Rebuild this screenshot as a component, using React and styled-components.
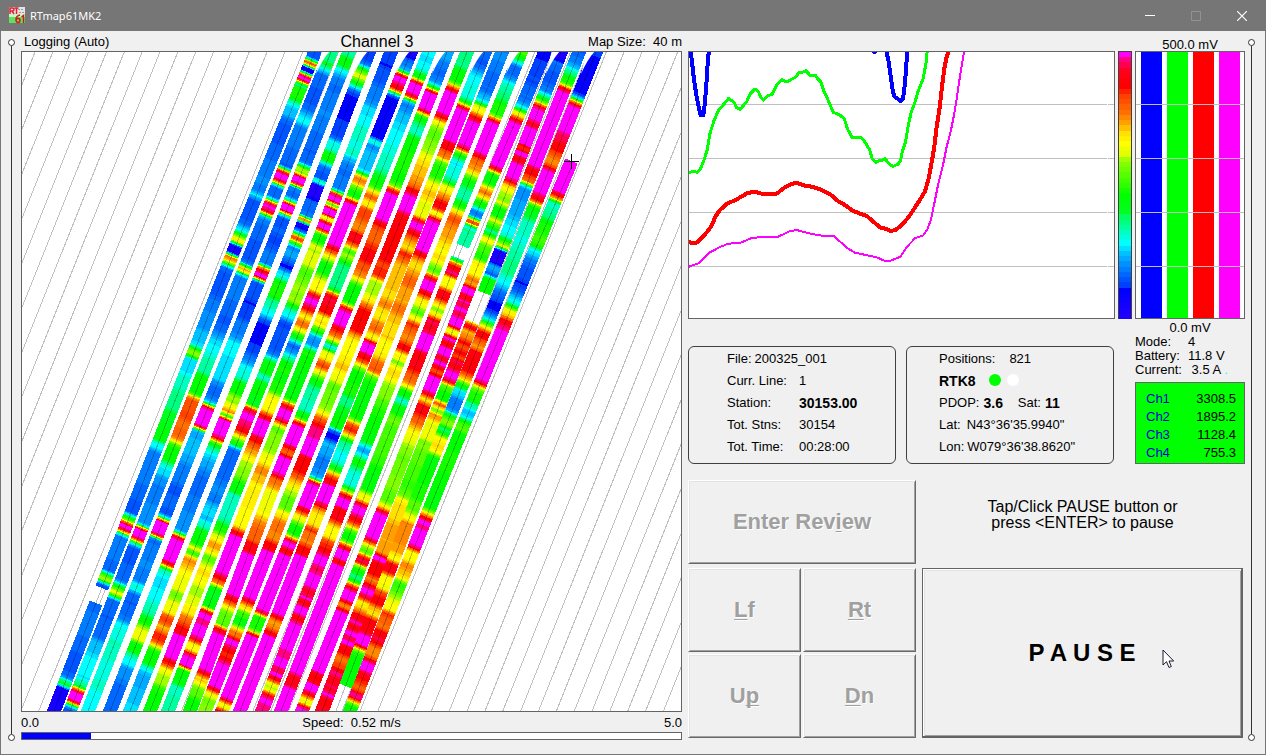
import React from "react";
import styled, { createGlobalStyle } from "styled-components";

const GlobalStyle = createGlobalStyle`
  * { box-sizing: border-box; }
  body {
    margin: 0;
    background: #f0f0f0;
    color: #000;
    font: 13px/14px "Liberation Sans", Arial, sans-serif;
  }
  p, h1, h2, table { margin: 0; }
`;

/* ---------- colour scale ---------- */

const ANCHORS = [
  [0, 0x2000ff], [5, 0x0000ff], [6, 0x0040ff], [8, 0x0068ff], [10, 0x0090ff],
  [12, 0x00c0ff], [14, 0x00ffff], [15, 0x00ffe0], [16, 0x00ffc0], [18, 0x00ff80],
  [19, 0x00ff60], [20, 0x00ff20], [23, 0x00ff00], [26, 0x40ff00], [29, 0x80ff00],
  [30, 0xa0ff00], [31, 0xe0ff00], [33, 0xffff00], [35, 0xffe000], [37, 0xffa000],
  [39, 0xff7000], [42, 0xff4000], [43, 0xff2000], [44, 0xff0000], [47, 0xff0020],
  [49, 0xff0080], [50, 0xff00ff],
];

const PALETTE = Array.from({ length: 51 }, (_, v) => {
  const hi = Math.max(1, ANCHORS.findIndex(([at]) => at >= v));
  const [a, ca] = ANCHORS[hi - 1];
  const [b, cb] = ANCHORS[hi];
  const t = (v - a) / (b - a);
  const channel = (shift) => {
    const from = (ca >> shift) & 255;
    const to = (cb >> shift) & 255;
    return Math.round(from + (to - from) * t);
  };
  return `rgb(${channel(16)}, ${channel(8)}, ${channel(0)})`;
});

/* Letter codes for levels on the scale; "-" is a gap in the track. */
const LEVEL = {
  V: 1, D: 5, b: 6, B: 8, s: 9, S: 11, k: 12, K: 13, c: 14, t: 16, T: 17, u: 18,
  g: 20, G: 23, l: 25, L: 26, h: 28, H: 29, a: 30, y: 32, Y: 33, f: 35, F: 36,
  o: 37, O: 39, r: 42, R: 45, P: 48, p: 49, M: 50, "-": null,
};

/* ---------- survey tracks ---------- */

/* x: track centre at the four KNOTS; data: level changes down the track. */
const KNOTS = [52, 250, 495, 711];
const TRACKS = [
  { x: [315, 234, 138, 54], data: "52B 60y 63M 66D 74R 76M 82a 84s 86G 100T 104k 118B 175s 193c 198B 225k 229c 233G 237Y 244V 255O 260Y 263G 266B 300s 330k 343c 347G 350a 357c 375t 390T 410g 425G 442c 450s 465B 515G 520y 523M 530R 532G 535B 573G 577Y 581G 583B 588- 603B 678c 681g 687V" },
  { x: [331, 252, 155, 70], data: "52T 62g 66t 68c 72B 105s 112k 117c 125s 130B 168G 170R 172M 181R 183G 186B 199G 202R 204M 210R 213Y 215k 219B 263k 266Y 269O 272G 275B 325s 333S 338K 345c 357t 370T 375G 395Y 398r 420O 438F 441y 444G 462T 467c 476S 485s 525c 526G 528M 539R 541G 544c 546B 583T 586G 590y 595G 598B 620s 640k 655K 680T 686G 689R 691M 702R 704G 706c 708B" },
  { x: [349, 271, 173, 88], data: "52T 57G 67T 70c 76s 85B 110s 148B 164c 166G 169Y 172G 175M 184R 186B 199T 201G 203M 213G 216B 235b 250B 266Y 268O 270R 272M 279G 281B 300b 320B 333s 340c 380k 383s 387B 400k 403c 405Y 406R 408M 427R 429c 431k 440K 455S 463s 470B 485b 495B 515s 516T 518G 520M 535R 537c 539B 560s 583t 592s 600B 618s 622K 627c 640t 690c 700K" },
  { x: [369, 293, 195, 110], data: "52b 62s 67G 72a 80G 84T 88s 92b 138s 141c 150T 153G 162c 166B 181Y 183V 199B 218R 222V 229s 234a 237R 239M 240Y 242G 246s 250k 258s 263b 270k 273c 277T 281G 298T 303t 309c 317s 321b 353B 358s 363k 367c 378T 382G 395a 404Y 409O 414G 418M 437R 440Y 442G 446T 451c 455k 460S 470s 532T 534Y 536R 538M 563R 566Y 568g 570t 576K 598c 604t 612u 617G 625a 629Y 642G 653T 658c 666s 680B 700s" },
  { x: [391, 315, 216, 130], data: "52b 68B 85s 105k 115K 122c 127t 150T 157k 163s 170B 191G 193R 195M 203G 207M 217G 220R 222M 231Y 234G 244y 248a 268L 278h 284a 300y 303G 308T 313c 319s 322b 350B 354s 357T 361G 374T 381G 397g 406y 408R 412M 421P 428R 433o 436Y 439L 443G 446T 448s 465B 485s 495B 503k 508K 522T 529G 546Y 551G 555y 558o 564f 570y 592h 596a 601Y 613o 616r 624F 632r 642o 645Y 648G 665T 669c 673k" },
  { x: [411, 332, 234, 150], data: "52V 57B 63s 68k 72y 75M 84R 91G 94s 96D 140T 144s 150S 165k 171T 174y 177O 184Y 187L 192G 198Y 200R 202M 247R 251O 255Y 258a 262G 275a 280Y 293R 297M 306R 311o 315Y 320O 328Y 331a 334G 339T 343s 350S 355T 361G 375g 380G 393a 397Y 411o 414R 418M 437R 441r 445O 449F 455Y 460a 464H 478L 482G 493T 503t 520u 525G 533a 538y 541F 544o 550Y 555h 563y 569F 576Y 585a 605Y 615O 622r 627R 633M 660R 663r 667Y 672a 677H 686G" },
  { x: [429, 350, 252, 168], data: "52K 63c 69T 73G 80R 82M 95R 98y 100c 103s 112S 122k 130c 145t 155T 172g 178G 189Y 194O 200Y 208r 220O 232R 235P 241r 246Y 250G 253a 259G 264T 287g 291Y 294R 297P 306R 315Y 320f 325a 329G 334k 338s 347T 351G 401Y 404R 408M 420R 423Y 427L 433H 449a 452y 456Y 462f 465o 468O 474F 483Y 527o 530R 534M 575R 578r 582F 586G 590g 598G 609R 612M 619p 625M 638R 642Y 646y 652R 655M 668G 685T" },
  { x: [447, 370, 270, 190], data: "52k 60s 68B 78s 84T 87G 89Y 91M 111R 113a 116G 121g 126T 136G 182l 186Y 189R 192M 222R 225r 230O 243r 250R 262r 271O 278y 281a 284G 304Y 307R 310M 327R 330r 335o 339Y 342G 345c 350y 354Y 359o 363r 369Y 373a 377G 382g 387t 412G 419Y 422R 424M 447r 451O 456M 475R 478O 485o 490Y 515f 518o 523O 542R 552M 597R 602o 607a 612L 627R 632M 672R 676f 683a 688L 698G" },
  { x: [467, 389, 290, 205], data: "52T 67g 71G 83Y 87R 90M 115R 118r 120Y 124H 130L 140H 148a 154Y 160F 167o 182O 188R 194M 213R 261r 278y 281H 292a 296Y 301o 306r 309R 333o 338Y 342y 355Y 363F 370Y 374y 383h 392H 407a 412Y 416O 420r 426P 437M 457R 473r 479F 485Y 489a 496L 510y 515f 520O 541R 549M 600R 604f 611L 618G 626Y 630O 638M 647R 652r 658R 662M 689R 692Y 698H" },
  { x: [485, 407, 309, 222], data: "52s 58B 65s 70k 75c 98T 101G 104Y 106R 108M 143R 151O 157F 160L 165G 179a 184Y 189F 201y 210Y 218R 221M 231R 236O 241f 248Y 251r 258O 263F 270o 278o 288F 293f 297F 302O 307f 313Y 320o 326O 332f 337a 340R 342M 355R 361O 365a 370G 396T 406g 413G 429s 433D 441k 449S 457B 468s 475S 478T 480Y 481R 483M 509R 513o 516Y 520a 524G 536Y 539R 541M 549r 553M 612R 615G 631Y 634M 700R 702Y 706a 709R" },
  { x: [502, 422, 325, 240], data: "52s 62B 85s 93k 98c 101T 104a 107Y 111f 115R 120M 147R 150Y 153G 158T 162c 167t 179g 184y 187Y 192o 198r 203R 210Y 214a 217R 220M 253R 258o 263f 270o 276O 287F 303O 314o 322F 340Y 357F 361O 369r 372Y 375L 380G 420Y 424r 433Y 437L 440T 446t 451c 461T 466G 471Y 474O 477R 483M 504R 508F 513Y 524f 528R 531O 545R 554M 616R 620o 624O 630R 634M" },
  { x: [521, 442, 346, 262], data: "52L 55G 59T 64s 77S 82t 88T 95u 102G 116Y 119R 121M 155R 159O 165o 171Y 175L 180g 188T 201G 206L 209Y 212o 216r 223O 229o 237F 243Y 250y 255f 258Y 262a 267L 273Y 276R 279M 292R 297f 302Y 306a 310L 315y 319Y 322r 328O 334o 340O 344R 352Y 356f 360H 365Y 369F 377Y 382a 386H 392h 400l 408G 443T 447k 455T 459G 466T 472c 487G 491Y 494R 497M 509R 514P 518R 522O 526Y 537f 540r 549R 554M 566P 573M 588P 596M 601R 605M 616R 622M 650p 658M 668P 672M 678R 682Y 685a 690Y 693R 697M 705P" },
  { x: [545, 461, 365, 281], data: "52D 75b 85B 93s 101S 105c 107T 110a 113Y 117R 121M 168R 171Y 173G 185Y 189O 196Y 200G 206T 210B 217c 219Y 221R 224y 226B 228T 246- 258T 261Y 264R 269P 273M 276Y 281y 287f 290R 300o 304Y 308h 312Y 316O 319P 333M 352R 369r 374O 384Y 389G 397T 405G 415h 425L 440l 465G 492y 497Y 502R 505M 516R 520r 525Y 529L 532G 542Y 545R 548M 561r 563M 675R 686M" },
  { x: [561, 484, 389, 302], data: "52V 60s 70B 85s 93T 98G 102Y 105R 108M 122R 126M 147O 150M 158R 162M 180R 183o 186Y 190a 195H 203Y 206G 218Y 223L 229T 233G 237Y 244L 250l 254G 261Y 266y 271Y 277O 283f 286M 296R 299M 303P 307M 312P 317M 328Y 331a 334Y 336M 342r 346M 357R 360M 367R 370r 375M 393R 397Y 400F 404R 413r 418O 425F 430Y 435y 445a 455h 490L 503y 507Y 509R 512M 540R 543Y 546a 549L 554Y 556R 560P 564Y 567G 573u 580G 583Y 585R 589M 602R 604o 608R 610M 674R 682M 693R 697Y 701a 705R 707M" },
  { x: [579, 501, 404, 322], data: "52B 57s 65k 70T 73u 77G 85Y 87R 90M 168R 175r 180O 184T 187S 218k 225K 232c 236T 239G 243a 246Y 249V 264k 272B 277G 293- 322Y 325M 329o 335O 340R 345r 350R 355r 360M 363R 370M 380R 384L 390G 402R 404O 407Y 410L 413O 417o 422y 440h 450L 490h 497Y 501f 523F 543o 555M 563R 577O 583R 587M 596R 600Y 608o 613R 620M 625R 630M 637P 640M 647R 656O 663r 670P 677R 685P 689R 692M 698R 707P" },
  { x: [596, 517, 418, 336], data: "52D 94B 97T 100Y 103R 105M 133P 143R 152r 157O 166R 169M 195R 202y 205G 211g 220T 235t 250T 276c 282K 288s 292B 300b 312B 315k 318c 321G 325Y 328F 331R 339O 345F 350R 374O 379Y 383G 389c 397s 411k 414G 419h 427T 432G 436Y 442f 450Y 455G 500L 511a 516Y 521O 544o 554Y 562R 574Y 579y 590r 596R 606o 612f 617R 633M 647Y 651G 686-" },
  { x: [616, 535, 435, 350], data: "40- 161M 194R 198Y 201T 212u 220G 235l 243G 248c 253k 258s 265B 280b 289B 295k 300c 305G 309Y 315F 319R 324P 329M 382R 385Y 388L 392G 402T 409k 417T 421L 427h 432G 508l 511Y 515r 519M 526P 528M 547R 550Y 562O 569o 577Y 581L 594a 601y 612r 617O 630R 638M 641R 646O 658R 661M 673R 679r 685O 691R 694M 698R 700Y 704G" },
].map(({ x, data }) => ({
  x,
  stops: data.split(" ").map((s) => [parseInt(s, 10), LEVEL[s.slice(-1)]]),
}));

const trackX = (x, y) => {
  const i = y < KNOTS[1] ? 0 : y < KNOTS[2] ? 1 : 2;
  return x[i] + ((y - KNOTS[i]) / (KNOTS[i + 1] - KNOTS[i])) * (x[i + 1] - x[i]);
};

const heldLevel = (stops, y) => {
  let level = stops[0][1];
  for (const [at, value] of stops) if (at <= y) level = value;
  return level;
};

const levelAt = (stops, y, seed) => {
  const here = heldLevel(stops, y);
  if (here === null) return null;
  let sum = 0;
  let n = 0;
  for (let d = -2; d <= 2; d += 1) {
    const v = heldLevel(stops, y + d);
    if (v !== null) { sum += v; n += 1; }
  }
  const mean = sum / n;
  if (mean > 49.5) return 50;
  const jitter = Math.sin(Math.floor(y / 4) * 12.9 + seed * 78.2) * 0.8;
  return Math.min(49, Math.max(0, Math.round(mean + jitter)));
};

/* Half of a slice's extent across the track. */
const HALF_X = 6.2;
const HALF_Y = 2.6;

/* One path per palette colour, holding every slice at that level. */
const slicePaths = () => {
  const paths = PALETTE.map(() => "");
  TRACKS.forEach(({ x, stops }, seed) => {
    let start = 44;
    let level = levelAt(stops, start, seed);
    for (let y = 45; y <= 720; y += 1) {
      const next = y === 720 ? undefined : levelAt(stops, y, seed);
      if (next !== level) {
        if (level !== null) {
          const a = trackX(x, start);
          const b = trackX(x, y);
          const corners = [
            [a - HALF_X, start - HALF_Y],
            [a + HALF_X, start + HALF_Y],
            [b + HALF_X, y + HALF_Y],
            [b - HALF_X, y - HALF_Y],
          ];
          paths[level] += `M${corners.map((c) => c.map((n) => n.toFixed(1)).join(" ")).join("L")}Z`;
        }
        start = y;
        level = next;
      }
    }
  });
  return paths;
};

const SLICES = slicePaths();
const GUIDES = Array.from({ length: 52 }, (_, i) => 35 + 17.85 * i);

function SurveyMap() {
  return (
    <Drawing viewBox="22 52 659 659" preserveAspectRatio="none" role="img" aria-label="Survey map">
      <g stroke="#c0c0c0" shapeRendering="crispEdges">
        {GUIDES.map((x) => <line key={x} x1={x} y1="52" x2={x - 264} y2="711" />)}
      </g>
      <g shapeRendering="crispEdges">
        {SLICES.map((d, i) => d && <path key={i} d={d} fill={PALETTE[i]} />)}
      </g>
      <g fill="#fff">
        {TRACKS.filter((_, i) => i % 2 === 1).map(({ x: [top] }) => (
          <path key={top} d={`M${top - 9} 50H${top}Q${top - 8} 58 ${top - 15} 74Z`} />
        ))}
      </g>
      <g fill="none" stroke="#000" strokeOpacity="0.25" shapeRendering="crispEdges">
        {TRACKS.map(({ x }, i) => (
          <polyline
            key={i}
            points={(i === 16 ? [[571, 168], ...KNOTS.slice(1).map((y, k) => [x[k + 1], y])] : KNOTS.map((y, k) => [x[k], y])).join(" ")}
          />
        ))}
      </g>
      <path d="M564 161.500H579M571.500 154V169" stroke="#000" fill="none" />
    </Drawing>
  );
}

/* ---------- profile chart ---------- */

const GRID_Y = [313, 475, 637, 799];
const PROFILES = [
  { color: "#00f", width: 12, d: "M32 150L37 195L42 240L50 290L57 325L62 345H70L74 315L79 255L83 190L85 165L90 150" },
  { color: "#00f", width: 12, d: "M578 150L583 156L589 150" },
  { color: "#00f", width: 12, d: "M618 150L625 180L631 220L637 265L643 290L652 295L661 303L669 297L675 250L679 195L682 150" },
  { color: "#0f0", width: 9, d: "M27 518L40 514L52 517L62 505L72 480L82 448L90 400L102 362L116 330L132 312L146 295L163 308L170 323L180 328L200 306L210 282L225 267L236 276L242 292L250 300L262 288L276 283L290 256L305 239L320 246L336 237L346 232L357 217L370 216L378 212L392 228L406 226L413 236L422 245L431 272L445 302L460 337L480 345L493 357L503 388L517 414L541 411L553 423L569 450L577 477L588 487L599 481H607L615 475L627 492L640 499L655 492L662 480L667 455L677 425L684 380L694 335L704 310L714 275L729 237L738 190L742 150" },
  { color: "#f00", width: 12, d: "M27 726L40 730L52 727L75 703L92 682L108 647L120 630L140 612L170 598L203 579L225 575L245 581H290L315 562L335 552L350 548L370 556L400 561L425 570L450 582L472 602L498 617L516 631L540 641L560 648L580 665L600 682L615 686L633 693L648 689L665 675L683 655L700 630L718 602L734 576L745 540L754 493L763 440L770 380L778 330L786 260L793 205L800 170L808 150" },
  { color: "#f0f", width: 6, d: "M27 800L40 795L56 790L90 757L120 741L145 731L180 729L215 714L245 711L295 710L328 694L350 690L380 698L415 706L463 709L500 743L525 758L590 772L615 783H630L661 770L683 738L706 714L730 706L742 688L752 662L762 615L775 550L790 490L800 440L812 395L822 345L831 290L842 215L853 150" },
];

function ProfileChart() {
  return (
    <Drawing viewBox="27 156 1275 798" preserveAspectRatio="none" role="img" aria-label="Channel profiles">
      {GRID_Y.map((y) => (
        <path key={y} d={`M27 ${y + 0.5}H1281M1284 ${y + 0.5}H1302`} stroke="#c0c0c0" strokeWidth="3" />
      ))}
      <g fill="none" strokeLinejoin="round" shapeRendering="crispEdges">
        {PROFILES.map(({ color, width, d }) => (
          <path key={d} d={d} stroke={color} strokeWidth={width} />
        ))}
      </g>
    </Drawing>
  );
}

/* ---------- styled parts ---------- */

const Window = styled.div`
  min-height: 100vh;
  display: flex;
  flex-direction: column;
  border: solid #767676;
  border-width: 0 1px 1px;
  overflow: hidden;
`;

const TitleBar = styled.header`
  height: 31px;
  display: flex;
  align-items: center;
  padding-left: 8px;
  background: #767676;
  color: #fff;
`;

const Title = styled.h1`
  flex: 1;
  padding-left: 4px;
  font: 11px/16px "Noto Sans", sans-serif;
`;

const CaptionButton = styled.button`
  width: 46px;
  height: 31px;
  padding: 0;
  border: 0;
  background: none;
  color: ${(p) => (p.disabled ? "#929292" : "#fff")};

  svg {
    display: block;
    margin: 0 auto;
  }
`;

const Workspace = styled.main`
  flex: 1;
  display: grid;
  grid-template-columns: 20px minmax(0, 661fr) minmax(0, 563fr) 20px;
`;

const Rail = styled.div`
  display: flex;
  flex-direction: column;
  align-items: center;
  width: 13px;
  padding: 8px 0 13px;
  justify-self: ${(p) => (p.$side === "left" ? "center" : "start")};

  &::before,
  &::after {
    content: "";
    width: 5px;
    height: 5px;
    border: 1px solid #333;
    border-radius: 50%;
    background: #fff;
  }
`;

const RailLine = styled.div`
  flex: 1;
  width: 1px;
  background: #333;
`;

const MapColumn = styled.section`
  display: flex;
  flex-direction: column;
`;

const MapCaption = styled.div`
  height: 20px;
  display: grid;
  grid-template-columns: 1fr auto 1fr;
  align-items: center;
  padding-top: 2px;
  padding-left: ${(p) => p.$indent || 0}px;
  white-space: pre;

  > :last-child {
    text-align: right;
  }
`;

const ChannelTitle = styled.h2`
  padding-left: 48px;
  font-size: 16px;
  font-weight: 400;
  line-height: 18px;
`;

const Plot = styled.div`
  border: 1px solid #646464;
  background: #fff;
  overflow: hidden;
`;

const MapPlot = styled(Plot)`
  aspect-ratio: 1;
`;

const ChartPlot = styled(Plot)`
  height: 268px;
`;

const Drawing = styled.svg`
  display: block;
  width: 100%;
  height: 100%;
`;

const SpeedTrack = styled.div`
  height: 8px;
  border: 1px solid #646464;
  background: #fff;
`;

const SpeedFill = styled.div`
  height: 100%;
  background: #00f;
`;

const SideColumn = styled.section`
  display: flex;
  flex-direction: column;
  gap: 16px;
  padding-left: 6px;
`;

const Readouts = styled.div`
  display: grid;
  grid-template-columns: minmax(0, 1fr) 14px 110px;
  column-gap: 3px;
  height: 433px;
`;

const ChartColumn = styled.div`
  display: flex;
  flex-direction: column;
  justify-content: space-between;
  padding-top: 20px;
`;

const ScaleBar = styled.div`
  display: flex;
  flex-direction: column;
  height: 268px;
  margin-top: 20px;
  border: 1px solid #404040;
  border-bottom: 0;
`;

const ScaleStep = styled.div`
  flex: 1;
  background: ${(p) => p.$color};
`;

const MeterColumn = styled.div`
  display: flex;
  flex-direction: column;
  padding-top: 7px;
`;

const MeterLabel = styled.p`
  text-align: center;
`;

const Meter = styled(Plot)`
  position: relative;
  display: flex;
  gap: 5px;
  height: 268px;
  margin: -1px 0 2px;
  padding: 0 4px 0 5px;

  &::after {
    content: "";
    position: absolute;
    inset: 0;
    background: repeating-linear-gradient(transparent 0 53px, #c0c0c0 53px 54px) 0 -1px;
  }
`;

const MeterBar = styled.div`
  flex: 1;
  background: ${(p) => p.$color};
`;

const PowerRow = styled.p`
  display: grid;
  grid-template-columns: 53px 1fr;
  white-space: pre;

  i {
    color: #0ff;
    font-style: normal;
  }
`;

const ChannelTable = styled.table`
  width: 100%;
  margin-top: auto;
  padding: 7px 8px 1px 10px;
  border: 1px solid #646464;
  border-spacing: 0;
  background: #0f0;

  th,
  td {
    height: 18px;
    padding: 0;
  }
  th {
    color: #0000d8;
    font-weight: 400;
    text-align: left;
  }
  td {
    text-align: right;
  }
`;

const Panels = styled.div`
  display: grid;
  grid-template-columns: 1fr 1fr;
  gap: 10px;
  padding-right: 1px;
`;

const Panel = styled.div`
  height: 118px;
  padding-top: 1px;
  padding-left: ${(p) => p.$indent}px;
  border: 1px solid #404040;
  border-radius: 6px;
`;

const PanelRow = styled.p`
  display: flex;
  gap: ${(p) => p.$gap || 0}px;
  line-height: 22px;
  white-space: nowrap;

  b {
    font-size: 14px;
  }
`;

const PanelLabel = styled.span`
  width: ${(p) => (p.$wide ? "72px" : "auto")};
`;

const Lamp = styled.span`
  width: 12px;
  height: 12px;
  margin-top: 4px;
  border-radius: 50%;
  background: ${(p) => p.$color};
`;

const Controls = styled.div`
  display: grid;
  grid-template-columns: 228px minmax(0, 1fr);
  gap: 6px;
  padding-right: 2px;
`;

const NavPad = styled.div`
  display: grid;
  grid-template-columns: 1fr 1fr;
  grid-template-rows: 86px 84px 84px;
  gap: 2px;
`;

const BevelButton = styled.button`
  height: 84px;
  padding: 0;
  border: 1px solid;
  border-color: #fff #696969 #696969 #fff;
  box-shadow: inset 1px 1px #e3e3e3, inset -1px -1px #a0a0a0;
  background: #f0f0f0;
  color: #a0a0a0;
  font: bold 22px/26px "Liberation Sans", Arial, sans-serif;
  text-shadow: 1px 1px #fff;
  grid-column: ${(p) => (p.$wide ? "span 2" : "auto")};

  u {
    text-decoration-thickness: 1px;
    text-underline-offset: 2px;
    text-decoration-skip-ink: none;
  }
`;

const ActionArea = styled.div`
  display: flex;
  flex-direction: column;
  justify-content: space-between;
`;

const Hint = styled.p`
  padding-top: 19px;
  text-align: center;
  font-size: 16px;
  line-height: 16px;
`;

const PauseButton = styled.button`
  position: relative;
  height: 170px;
  border: 1px solid #646464;
  border-width: 1px 2px 2px 1px;
  box-shadow: inset 1px 1px #fff, inset 2px 2px #e3e3e3, inset -1px -1px #a0a0a0;
  background: #f0f0f0;
  color: #000;
  font: bold 24px/28px "Liberation Sans", Arial, sans-serif;
`;

const Pointer = styled.svg`
  position: absolute;
  left: 75%;
  top: 80px;
`;

const METER_COLORS = ["#00f", "#0f0", "#f00", "#f0f"];
const CHANNELS = [["Ch1", "3308.5"], ["Ch2", "1895.2"], ["Ch3", "1128.4"], ["Ch4", "755.3"]];
const SPEED = 0.52;
const MAX_SPEED = 5;

function AppIcon() {
  return (
    <svg width="17" height="17" viewBox="0 0 17 17" aria-hidden="true">
      <path fill="#e4e4e4" d="M0 0H16V8H0Z" />
      <path fill="#c8f5c8" d="M0 7H16V11H0Z" />
      <path fill="#5fe05f" d="M0 10H16V16H0Z" />
      <path stroke="#999" d="M9 2.500H15M10 5.500H16" strokeDasharray="2 1" />
      <path fill="none" stroke="#e02030" strokeWidth="1.500" d="M1 7V1H3.500Q5 1 5 2.500T3.500 4H1M3 4L5 7M5.500 1H9.500M7.500 1V7" />
      <path fill="none" stroke="#d01818" strokeWidth="1.500" d="M11 8Q7 9 7 12.500Q7 15.500 9 15.500T11 13Q11 11.500 9 11.500T7 13M12.500 10L14.500 8.500V16" />
    </svg>
  );
}

export default function App() {
  return (
    <>
      <GlobalStyle />
      <Window>
        <TitleBar>
          <AppIcon />
          <Title>RTmap61MK2</Title>
          <CaptionButton aria-label="Minimize">
            <svg width="10" height="11"><path d="M0 5.500H10" stroke="currentColor" /></svg>
          </CaptionButton>
          <CaptionButton aria-label="Maximize" disabled>
            <svg width="10" height="10"><path d="M.5.5H9.500V9.500H.5Z" fill="none" stroke="currentColor" /></svg>
          </CaptionButton>
          <CaptionButton aria-label="Close">
            <svg width="10" height="10"><path d="M0 0L10 10M10 0L0 10" stroke="currentColor" strokeWidth="1.200" /></svg>
          </CaptionButton>
        </TitleBar>

        <Workspace>
          <Rail $side="left"><RailLine /></Rail>

          <MapColumn>
            <MapCaption $indent={3}>
              <span>Logging (Auto)</span>
              <ChannelTitle>Channel 3</ChannelTitle>
              <span>{"Map Size:  40 m"}</span>
            </MapCaption>
            <MapPlot><SurveyMap /></MapPlot>
            <MapCaption>
              <span>0.0</span>
              <span>{"Speed:  0.52 m/s"}</span>
              <span>5.0</span>
            </MapCaption>
            <SpeedTrack role="progressbar" aria-label="Speed" aria-valuenow={SPEED} aria-valuemin={0} aria-valuemax={MAX_SPEED}>
              <SpeedFill style={{ width: `${(SPEED / MAX_SPEED) * 100}%` }} />
            </SpeedTrack>
          </MapColumn>

          <SideColumn>
            <Readouts>
              <ChartColumn>
                <ChartPlot><ProfileChart /></ChartPlot>
                <Panels>
                  <Panel $indent={38}>
                    <PanelRow $gap={3}><span>File:</span><span>200325_001</span></PanelRow>
                    <PanelRow><PanelLabel $wide>Curr. Line:</PanelLabel><span>1</span></PanelRow>
                    <PanelRow><PanelLabel $wide>Station:</PanelLabel><b>30153.00</b></PanelRow>
                    <PanelRow><PanelLabel $wide>Tot. Stns:</PanelLabel><span>30154</span></PanelRow>
                    <PanelRow><PanelLabel $wide>Tot. Time:</PanelLabel><span>00:28:00</span></PanelRow>
                  </Panel>
                  <Panel $indent={32}>
                    <PanelRow $gap={14}><span>Positions:</span><span>821</span></PanelRow>
                    <PanelRow $gap={6}>
                      <PanelLabel as="b">RTK8&nbsp;&nbsp;</PanelLabel>
                      <Lamp $color="#0f0" />
                      <Lamp $color="#fff" />
                    </PanelRow>
                    <PanelRow $gap={4}><span>PDOP:</span><b>3.6</b><span>&nbsp;&nbsp;&nbsp;Sat:</span><b>11</b></PanelRow>
                    <PanelRow $gap={6}><span>Lat:</span><span>N43°36'35.9940"</span></PanelRow>
                    <PanelRow $gap={3}><span>Lon:</span><span>W079°36'38.8620"</span></PanelRow>
                  </Panel>
                </Panels>
              </ChartColumn>

              <ScaleBar aria-hidden="true">
                {[...PALETTE].reverse().map((color, i) => <ScaleStep key={i} $color={color} />)}
              </ScaleBar>

              <MeterColumn>
                <MeterLabel>500.0 mV</MeterLabel>
                <Meter>
                  {METER_COLORS.map((color) => <MeterBar key={color} $color={color} />)}
                </Meter>
                <MeterLabel>0.0 mV</MeterLabel>
                <PowerRow><span>Mode:</span><span>4</span></PowerRow>
                <PowerRow><span>Battery:</span><span>11.8 V</span></PowerRow>
                <PowerRow><span>Current:</span><span>{" 3.5 A "}<i>.</i></span></PowerRow>
                <ChannelTable>
                  <tbody>
                    {CHANNELS.map(([name, value]) => (
                      <tr key={name}><th scope="row">{name}</th><td>{value}</td></tr>
                    ))}
                  </tbody>
                </ChannelTable>
              </MeterColumn>
            </Readouts>

            <Controls>
              <NavPad>
                <BevelButton $wide disabled>Enter Rev<u>i</u>ew</BevelButton>
                <BevelButton disabled><u>L</u>f</BevelButton>
                <BevelButton disabled><u>R</u>t</BevelButton>
                <BevelButton disabled>U<u>p</u></BevelButton>
                <BevelButton disabled><u>D</u>n</BevelButton>
              </NavPad>
              <ActionArea>
                <Hint>Tap/Click PAUSE button or<br />press &lt;ENTER&gt; to pause</Hint>
                <PauseButton>
                  P A U S E
                  <Pointer width="13" height="20" viewBox="0 0 13 20" aria-hidden="true">
                    <path d="M1 1V16L4.500 12.700L7 18.500L9.300 17.500L7 12H11.700Z" fill="#fff" stroke="#1a1a2e" />
                  </Pointer>
                </PauseButton>
              </ActionArea>
            </Controls>
          </SideColumn>

          <Rail $side="right"><RailLine /></Rail>
        </Workspace>
      </Window>
    </>
  );
}
